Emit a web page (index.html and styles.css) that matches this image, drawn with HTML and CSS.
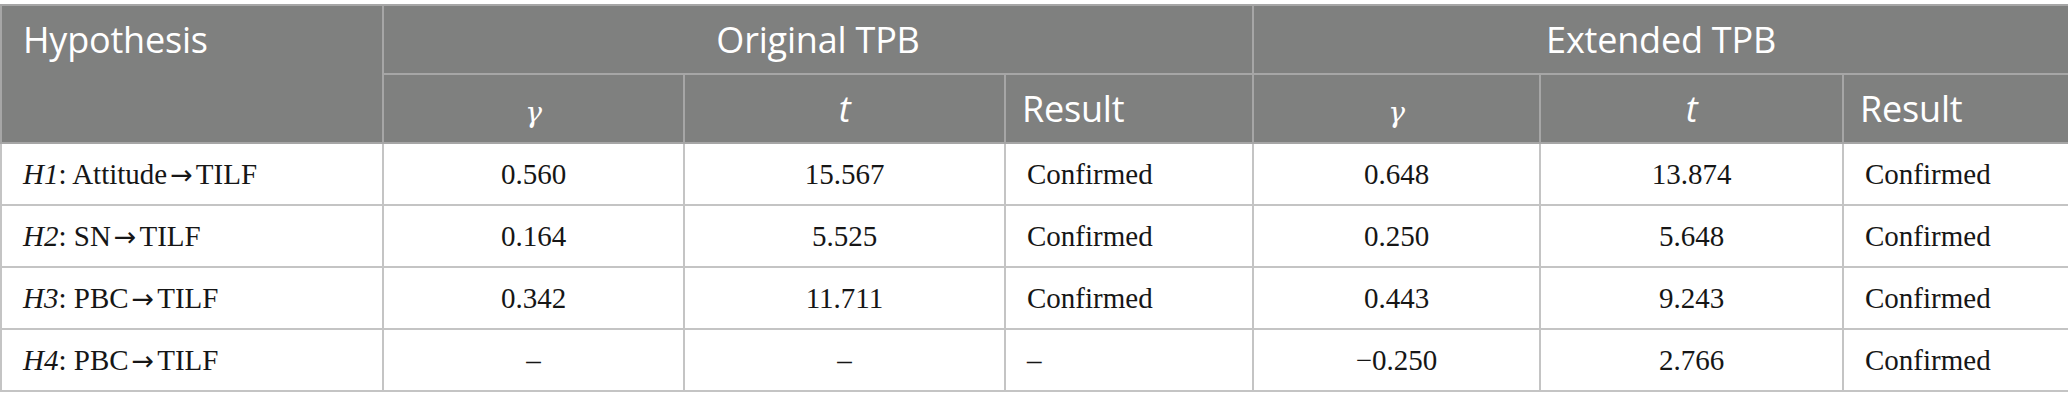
FILE: index.html
```html
<!DOCTYPE html>
<html>
<head>
<meta charset="utf-8">
<link rel="stylesheet" href="styles.css">
</head>
<body>
<table class="tbl">
  <colgroup>
    <col class="c1"><col class="c2"><col class="c3"><col class="c4"><col class="c5"><col class="c6"><col class="c7">
  </colgroup>
  <thead>
    <tr class="h1row">
      <th rowspan="2" class="hyp">Hypothesis</th>
      <th colspan="3" class="grp">Original TPB</th>
      <th colspan="3" class="grp">Extended TPB</th>
    </tr>
    <tr class="h2row">
      <th class="ctr"><span class="gamma">γ</span></th>
      <th class="ctr"><span class="it">t</span></th>
      <th class="lft">Result</th>
      <th class="ctr"><span class="gamma">γ</span></th>
      <th class="ctr"><span class="it">t</span></th>
      <th class="lft">Result</th>
    </tr>
  </thead>
  <tbody>
    <tr>
      <td class="lft"><i>H1</i>: Attitude<span class="arr">→</span>TILF</td>
      <td class="ctr">0.560</td><td class="ctr">15.567</td><td class="lft">Confirmed</td>
      <td class="ctr">0.648</td><td class="ctr">13.874</td><td class="lft">Confirmed</td>
    </tr>
    <tr>
      <td class="lft"><i>H2</i>: SN<span class="arr">→</span>TILF</td>
      <td class="ctr">0.164</td><td class="ctr">5.525</td><td class="lft">Confirmed</td>
      <td class="ctr">0.250</td><td class="ctr">5.648</td><td class="lft">Confirmed</td>
    </tr>
    <tr>
      <td class="lft"><i>H3</i>: PBC<span class="arr">→</span>TILF</td>
      <td class="ctr">0.342</td><td class="ctr">11.711</td><td class="lft">Confirmed</td>
      <td class="ctr">0.443</td><td class="ctr">9.243</td><td class="lft">Confirmed</td>
    </tr>
    <tr>
      <td class="lft"><i>H4</i>: PBC<span class="arr">→</span>TILF</td>
      <td class="ctr">–</td><td class="ctr">–</td><td class="lft">–</td>
      <td class="ctr">−0.250</td><td class="ctr">2.766</td><td class="lft">Confirmed</td>
    </tr>
  </tbody>
</table>
</body>
</html>
```
FILE: styles.css
```css
html, body {
  margin: 0;
  padding: 0;
  background: #ffffff;
}
body {
  padding-top: 4px;
}
.tbl {
  width: 2068px;
  border-collapse: collapse;
  table-layout: fixed;
  font-family: "Liberation Serif", serif;
  font-size: 29px;
  color: #161616;
}
.c1 { width: 382px; }
.c2 { width: 301px; }
.c3 { width: 321px; }
.c4 { width: 248px; }
.c5 { width: 287px; }
.c6 { width: 303px; }
.c7 { width: 226px; }

.tbl th {
  background: #7f807f;
  color: #ffffff;
  font-family: "Open Sans", sans-serif;
  font-weight: 400;
  font-size: 36px;
  letter-spacing: -0.2px;
  border: 2px solid #a6a6a6;
  padding: 0 16px;
}
.h1row th { height: 67px; }
.h2row th { height: 67px; }
.tbl th.hyp {
  text-align: left;
  vertical-align: top;
  padding-top: 9px;
  padding-left: 21px;
}
.tbl th.grp {
  text-align: center;
  vertical-align: middle;
}
.tbl td {
  border: 2px solid #c4c4c4;
  height: 60px;
  padding: 0 14px 0 21px;
  vertical-align: middle;
}
.ctr { text-align: center; }
.lft { text-align: left; }
.tbl th.lft { text-align: left; }
.tbl th.ctr { text-align: center; }
.tbl td.ctr { padding: 0 18px; }
.gamma {
  font-family: "DejaVu Serif", serif;
  font-style: italic;
  font-size: 28px;
}
.it { font-style: italic; }
.arr {
  font-family: "DejaVu Sans", sans-serif;
  font-size: 27px;
  margin: 0 3px;
}
```
